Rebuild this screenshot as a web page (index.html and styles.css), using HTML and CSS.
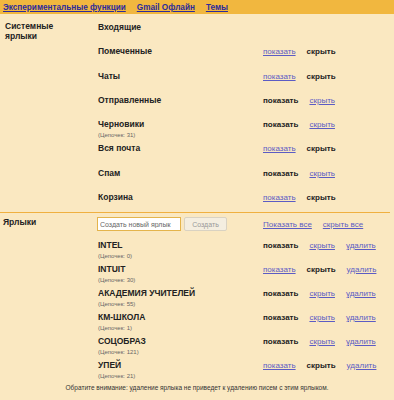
FILE: index.html
```html
<!DOCTYPE html>
<html lang="ru">
<head>
    <meta charset="UTF-8">
    <meta name="viewport" content="width=device-width, initial-scale=1.0">
    <title>Настройки - Ярлыки</title>
    <link rel="stylesheet" href="styles.css">
</head>
<body>
    <div class="topbar">
        <a href="#">Экспериментальные функции</a>
        <a href="#">Gmail Офлайн</a>
        <a href="#">Темы</a>
    </div>

    <!-- System labels -->
    <div class="sect system">
        <div class="sect-title">Системные<br>ярлыки</div>
        <div class="rows">
            <div class="row">
                <div class="name">Входящие</div>
                <div class="acts"></div>
            </div>
            <div class="row">
                <div class="name">Помеченные</div>
                <div class="acts"><a href="#">показать</a><b>скрыть</b></div>
            </div>
            <div class="row">
                <div class="name">Чаты</div>
                <div class="acts"><a href="#">показать</a><b>скрыть</b></div>
            </div>
            <div class="row">
                <div class="name">Отправленные</div>
                <div class="acts"><b>показать</b><a href="#">скрыть</a></div>
            </div>
            <div class="row">
                <div class="name">Черновики<span class="sub">(Цепочек: 31)</span></div>
                <div class="acts"><b>показать</b><a href="#">скрыть</a></div>
            </div>
            <div class="row">
                <div class="name">Вся почта</div>
                <div class="acts"><a href="#">показать</a><b>скрыть</b></div>
            </div>
            <div class="row">
                <div class="name">Спам</div>
                <div class="acts"><b>показать</b><a href="#">скрыть</a></div>
            </div>
            <div class="row">
                <div class="name">Корзина</div>
                <div class="acts"><a href="#">показать</a><b>скрыть</b></div>
            </div>
        </div>
    </div>

    <!-- User labels -->
    <div class="sect labels">
        <div class="sect-title">Ярлыки</div>
        <div class="rows">
            <div class="create-row">
                <div class="create">
                    <input type="text" placeholder="Создать новый ярлык">
                    <button>Создать</button>
                </div>
                <div class="acts"><a href="#">Показать все</a><a href="#">скрыть все</a></div>
            </div>
            <div class="row">
                <div class="name">INTEL<span class="sub">(Цепочек: 0)</span></div>
                <div class="acts"><b>показать</b><a href="#">скрыть</a><a href="#">удалить</a></div>
            </div>
            <div class="row">
                <div class="name">INTUIT<span class="sub">(Цепочек: 30)</span></div>
                <div class="acts"><a href="#">показать</a><b>скрыть</b><a href="#">удалить</a></div>
            </div>
            <div class="row">
                <div class="name">АКАДЕМИЯ УЧИТЕЛЕЙ<span class="sub">(Цепочек: 55)</span></div>
                <div class="acts"><b>показать</b><a href="#">скрыть</a><a href="#">удалить</a></div>
            </div>
            <div class="row">
                <div class="name">КМ-ШКОЛА<span class="sub">(Цепочек: 1)</span></div>
                <div class="acts"><b>показать</b><a href="#">скрыть</a><a href="#">удалить</a></div>
            </div>
            <div class="row">
                <div class="name">СОЦОБРАЗ<span class="sub">(Цепочек: 121)</span></div>
                <div class="acts"><b>показать</b><a href="#">скрыть</a><a href="#">удалить</a></div>
            </div>
            <div class="row">
                <div class="name">УПЕЙ<span class="sub">(Цепочек: 21)</span></div>
                <div class="acts"><a href="#">показать</a><b>скрыть</b><a href="#">удалить</a></div>
            </div>
        </div>
    </div>

    <p class="note">Обратите внимание: удаление ярлыка не приведет к удалению писем с этим ярлыком.</p>
</body>
</html>
```

FILE: styles.css
```css
/* General */
* {
    margin: 0;
    padding: 0;
    box-sizing: border-box;
}

body {
    font-family: 'Liberation Sans', Arial, sans-serif;
    background-color: #fae8c1;
    color: #222;
    height: 400px;
}

/* Top tabs */
.topbar {
    display: flex;
    gap: 11px;
    height: 14px;
    padding-left: 3px;
    background-color: #f1b73f;
    align-items: center;
}

.topbar a {
    font-size: 8.2px;
    font-weight: bold;
    color: #2b2b9c;
}

/* Sections */
.sect {
    display: grid;
    grid-template-columns: 98px 1fr;
}

.sect-title {
    padding-left: 5px;
    font-size: 8.5px;
    font-weight: bold;
    line-height: 10px;
}

.system {
    padding-top: 8px;
}

.system .sect-title {
    margin-top: -1px;
}

.system .row {
    height: 24.3px;
}

.system .row:last-child {
    height: 20px;
}

.labels {
    border-top: 1px solid #f0b040;
    width: 390px;
}

.labels .sect-title {
    padding: 4px 0 0 3px;
    line-height: 11px;
}

/* Rows */
.row, .create-row {
    display: grid;
    grid-template-columns: 165px 1fr;
    height: 24px;
}

.create-row {
    height: 27px;
    padding-top: 4px;
}

.name {
    font-size: 8.5px;
    font-weight: bold;
    line-height: 11px;
}

.sub {
    display: block;
    margin-top: 1px;
    font-size: 6px;
    font-weight: normal;
    line-height: 8px;
    color: #666;
}

.acts {
    display: flex;
    gap: 11px;
    font-size: 8px;
    line-height: 11px;
}

.acts a {
    color: #5c5cc4;
}

.acts b {
    color: #222;
}

/* Create label */
.create {
    display: flex;
    gap: 3px;
    margin-left: -1px;
}

.create input {
    width: 84px;
    height: 14px;
    padding: 0 2px;
    border: 1px solid #e4b44c;
    background-color: #fff;
    font-family: inherit;
    font-size: 7px;
}

.create input::placeholder {
    color: #666;
}

.create button {
    width: 43px;
    height: 14px;
    border: 1px solid #d9d2c2;
    border-radius: 2px;
    background-color: #f4eee0;
    color: #999;
    font-family: inherit;
    font-size: 7px;
}

.create-row .acts {
    padding-top: 2px;
}

/* Footer note */
.note {
    text-align: center;
    font-size: 6.5px;
    line-height: 8px;
    color: #333;
}
```
